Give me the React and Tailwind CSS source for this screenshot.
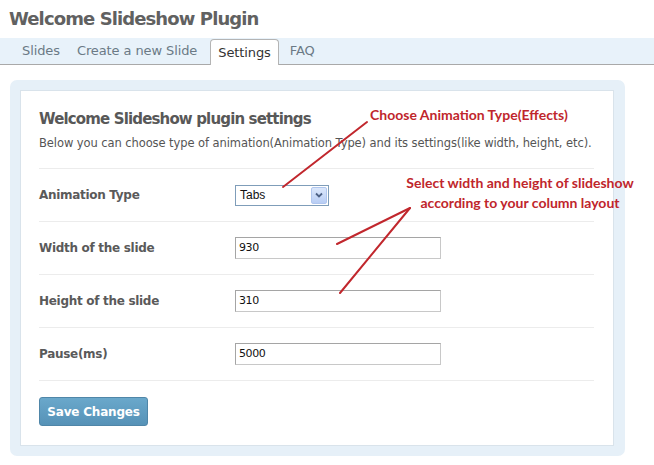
import React from 'react';

const rows = [
    { label: 'Width of the slide', value: '930' },
    { label: 'Height of the slide', value: '310' },
    { label: 'Pause(ms)', value: '5000' },
];

function Tab({ children, active }) {
    if (active) {
        return (
            <div className="relative -mb-px ml-[2px] h-[26px] px-[7px] rounded-t-[4px] border border-b-0 border-[#b4b4b4] bg-white text-[#333] flex items-center">
                {children}
            </div>
        );
    }
    return <div className="h-[26px] px-[6px] flex items-center text-[#6b7a86]">{children}</div>;
}

export default function App() {
    return (
        <div className="relative w-[654px] h-[465px] bg-white overflow-hidden" style={{ fontFamily: '"DejaVu Sans", Verdana, sans-serif' }}>
            <h1 className="pl-[9px] pt-[6px] h-[38px] text-[18px] font-bold tracking-[-0.9px] text-[#616161] leading-[26px]">
                Welcome Slideshow Plugin
            </h1>

            {/* tab bar */}
            <div className="h-[27px] bg-[#e8f2fa] border-b border-[#a9a9a9] flex items-end pl-[16px] gap-[5px] text-[13px] tracking-[-0.1px]">
                <Tab>Slides</Tab>
                <Tab>Create a new Slide</Tab>
                <Tab active>Settings</Tab>
                <Tab>FAQ</Tab>
            </div>

            {/* settings panel */}
            <div className="ml-[10px] mt-[15px] w-[615px] rounded-[7px] bg-[#e6f0f8] p-[10px] pr-[11px]">
                <div className="bg-white border border-[#d9e3eb] pl-[18px] pr-[19px] pt-[18px] pb-[19px]">
                    <h2 className="text-[15px] font-bold tracking-[-0.85px] text-[#585858] leading-[20px]">
                        Welcome Slideshow plugin settings
                    </h2>
                    <p className="mt-[6px] whitespace-nowrap text-[11.5px] tracking-[-0.08px] text-[#555] leading-[16px]">
                        Below you can choose type of animation(Animation Type) and its settings(like width, height, etc).
                    </p>

                    <div className="mt-[17px] border-b border-[#ececec]">
                        <div className="h-[53px] border-t border-[#ececec] flex items-center">
                            <div className="w-[196px] text-[12px] font-bold tracking-[-0.3px] text-[#5a5a5a]">Animation Type</div>
                            <div className="w-[94px] h-[21px] border border-[#7f9db9] bg-white flex items-center justify-between pl-[4px] pr-[1px]">
                                <span className="text-[12px] text-[#111]" style={{ fontFamily: '"Liberation Sans", Arial, sans-serif' }}>Tabs</span>
                                <span className="w-[16px] h-[17px] rounded-[2px] bg-gradient-to-b from-[#dbe7fb] to-[#b8cdf4] border border-[#b0c6ee] flex items-center justify-center">
                                    <svg width="8" height="6" viewBox="0 0 8 6">
                                        <path d="M1 1.5 L4 4.5 L7 1.5" fill="none" stroke="#4d6185" strokeWidth="1.8" />
                                    </svg>
                                </span>
                            </div>
                        </div>
                        {rows.map(r => (
                            <div key={r.label} className="h-[53px] border-t border-[#ececec] flex items-center">
                                <div className="w-[196px] text-[12px] font-bold tracking-[-0.3px] text-[#5a5a5a]">{r.label}</div>
                                <div className="w-[206px] h-[22px] border border-[#a5a5a5] border-r-[#c8c8c8] border-b-[#c8c8c8] bg-white flex items-center pl-[3px] text-[11px] tracking-[-0.4px] text-[#111]">
                                    {r.value}
                                </div>
                            </div>
                        ))}
                    </div>

                    <button className="mt-[16px] w-[109px] h-[29px] rounded-[3px] border border-[#4f86a8] bg-gradient-to-b from-[#6aa8cb] to-[#5692b7] text-white text-[12px] font-bold tracking-[-0.2px]">
                        Save Changes
                    </button>
                </div>
            </div>

            {/* annotations */}
            <div className="absolute left-[370px] top-[104px] text-[14px] font-bold text-[#bf262c]" style={{ fontFamily: 'Lato, "Open Sans", sans-serif' }}>
                Choose Animation Type(Effects)
            </div>
            <div className="absolute left-[400px] top-[173px] w-[240px] text-center text-[14px] leading-[20px] font-bold text-[#bf262c]" style={{ fontFamily: 'Lato, "Open Sans", sans-serif' }}>
                Select width and height of slideshow<br />according to your column layout
            </div>
            <svg className="absolute left-0 top-0 pointer-events-none" width="654" height="465">
                <g stroke="#c1272d" strokeWidth="2" strokeLinecap="round">
                    <line x1="367" y1="122" x2="283" y2="187" />
                    <line x1="410" y1="208" x2="337" y2="244" />
                    <line x1="410" y1="208" x2="340" y2="293" />
                </g>
            </svg>
        </div>
    );
}
